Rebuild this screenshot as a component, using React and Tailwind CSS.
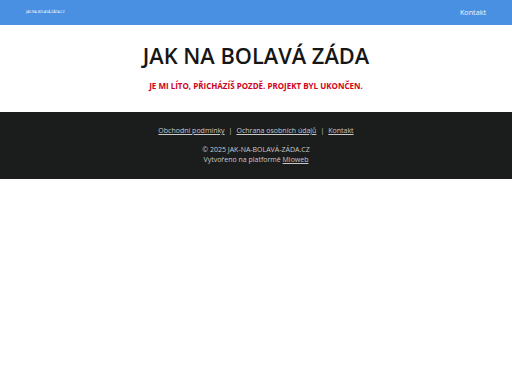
export default function App() {
  return (
    <div className="min-h-[384px] bg-white font-['Open_Sans',sans-serif]">
      <header className="h-[25px] bg-[#4a90e2] flex items-center justify-between pl-[26px] pr-[26px]">
        <span className="text-[3.3px] text-white uppercase">JAK-NA-BOLAVÁ-ZÁDA.CZ</span>
        <a href="#" className="text-[7.2px] text-white/90">Kontakt</a>
      </header>
      <main className="pt-[15px] pb-[20px] text-center">
        <h1 className="text-[21.8px] font-semibold text-[#161616] leading-[32px]">JAK NA BOLAVÁ ZÁDA</h1>
        <p className="mt-[8px] text-[8px] font-bold text-[#d0021b] leading-[12px]">JE MI LÍTO, PŘICHÁZÍŠ POZDĚ. PROJEKT BYL UKONČEN.</p>
      </main>
      <footer className="bg-[#1b1c1c] h-[67px] pt-[13px] text-center text-[7px] text-[#c8c8c8]">
        <div className="flex justify-center items-center gap-[4px] leading-[12px]">
          <a href="#" className="underline">Obchodní podmínky</a>
          <span>|</span>
          <a href="#" className="underline">Ochrana osobních údajů</a>
          <span>|</span>
          <a href="#" className="underline">Kontakt</a>
        </div>
        <p className="mt-[8px] leading-[10px]">© 2025 JAK-NA-BOLAVÁ-ZÁDA.CZ</p>
        <p className="leading-[10px]">Vytvořeno na platformě <a href="#" className="underline">Mioweb</a></p>
      </footer>
    </div>
  );
}
